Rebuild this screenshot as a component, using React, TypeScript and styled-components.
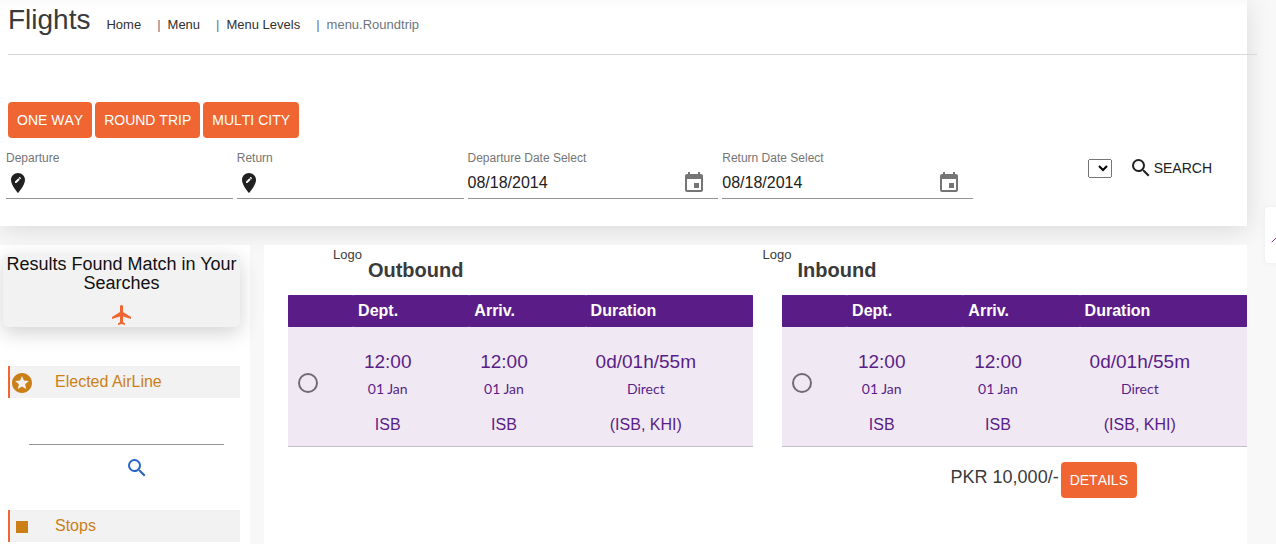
import React from "react";
import styled, { createGlobalStyle } from "styled-components";
import { ChevronUp } from "lucide-react";
import {
  MdEditLocation,
  MdEvent,
  MdFlight,
  MdSearch,
  MdStars,
  MdStop,
} from "react-icons/md";

const orange = "#f06632";
const purple = "#5a1d87";
const amber = "#cb8017";

const GlobalStyle = createGlobalStyle`
  *, *::before, *::after { box-sizing: border-box; }
  html { background: #f8f8f8; }
  body {
    margin: 0;
    font-family: "Liberation Sans", Arial, sans-serif;
    font-size: 13px;
    line-height: 20px;
    color: #3a3a3a;
  }
  h1, h2, h3, p { margin: 0; }
  input, button, select { font-family: inherit; }
`;

const Page = styled.main`
  padding-right: 29px;
`;

const TopCard = styled.section`
  background: #fff;
  box-shadow: 0 4px 24px rgba(0, 0, 0, 0.12);
  padding-bottom: 27px;
  background-image: linear-gradient(#fafafa, #fff 8px);
`;

const Heading = styled.header`
  display: flex;
  align-items: baseline;
  gap: 16px;
  margin: 0 -10px 47px 8px;
  padding: 2px 0 17px;
  border-bottom: 1px solid #d7d7d7;
`;

const Title = styled.h1`
  font-size: 28px;
  font-weight: 400;
  line-height: 35px;
`;

const Crumbs = styled.ol`
  display: flex;
  margin: 0;
  padding: 0;
  list-style: none;
`;

const Crumb = styled.li`
  color: #6c757d;

  & + &::before {
    content: "|";
    margin: 0 7px 0 16px;
  }

  a {
    color: #303030;
    text-decoration: none;
  }
`;

const TripTypes = styled.div`
  display: flex;
  gap: 3px;
  padding-left: 8px;
`;

const OrangeButton = styled.button`
  height: 36px;
  padding: 0 9px;
  border: 0;
  border-radius: 4px;
  background: ${orange};
  color: #fff;
  font-size: 14px;
  font-kerning: none;
  text-transform: uppercase;
`;

const SearchForm = styled.form`
  display: grid;
  grid-template-columns: minmax(0, 967px) auto;
  justify-content: space-between;
  padding: 10px 29px 0 6px;
`;

const Fields = styled.div`
  display: grid;
  grid-template-columns: 227fr 227fr 251fr 251fr;
  gap: 4px;
`;

const Field = styled.div`
  min-width: 0;
`;

const FieldLabel = styled.label`
  display: block;
  font-size: 12px;
  line-height: 20px;
  color: #757575;
`;

const Control = styled.div<{ $padRight?: boolean }>`
  display: flex;
  align-items: center;
  height: 31px;
  padding-right: ${(p) => (p.$padRight ? "12px" : "0")};
  border-bottom: 1px solid #949494;
  color: #212121;
`;

const TextInput = styled.input`
  flex: 1;
  min-width: 0;
  height: 30px;
  padding: 0;
  border: 0;
  outline: 0;
  background: transparent;
  font-size: 16px;
  color: #212121;
`;

const IconButton = styled.button<{ $color: string }>`
  display: flex;
  padding: 0;
  border: 0;
  background: transparent;
  color: ${(p) => p.$color};
`;

const FormActions = styled.div`
  display: flex;
  align-items: center;
  align-self: start;
  gap: 17px;
  padding-top: 8px;
`;

const SmallSelect = styled.select`
  width: 24px;
  height: 19px;
`;

const SearchButton = styled.button`
  display: flex;
  align-items: center;
  gap: 1px;
  height: 24px;
  padding: 0 6px 0 0;
  border: 0;
  background: transparent;
  color: #212121;
  font-size: 14px;
  font-kerning: none;
  text-transform: uppercase;
`;

const Results = styled.div`
  display: grid;
  grid-template-columns: 250px minmax(0, 1fr);
  gap: 14px;
  margin-top: 19px;
`;

const Sidebar = styled.aside`
  padding: 9px 10px 2px 8px;
  background: #fff;
`;

const Summary = styled.section`
  display: flex;
  flex-direction: column;
  align-items: center;
  height: 73px;
  margin: 0 0 39px -5px;
  padding-top: 1px;
  border-radius: 5px;
  background: #f2f2f2;
  box-shadow: 0 6px 20px rgba(0, 0, 0, 0.18);
  text-align: center;

  svg { margin-top: 10px; color: ${orange}; }
`;

const SummaryText = styled.h2`
  font-size: 18px;
  font-weight: 400;
  line-height: 19px;
  color: #111;
`;

const FilterHead = styled.div`
  display: flex;
  align-items: center;
  gap: 21px;
  height: 32px;
  padding-top: 2px;
  border-left: 2px solid ${orange};
  background: #f2f2f2;
  color: ${amber};
`;

const FilterTitle = styled.h3`
  padding-bottom: 2px;
  font-size: 16px;
  font-weight: 400;
`;

const AirlineSearch = styled.div`
  display: flex;
  flex-direction: column;
  align-items: center;
  padding: 16px 16px 30px 21px;
`;

const AirlineInput = styled(TextInput)`
  flex: none;
  width: 100%;
  height: 31px;
  border-bottom: 1px solid #949494;
`;

const AirlineSubmit = styled(IconButton)`
  padding: 11px 0 0 20px;
`;

const Main = styled.section`
  padding-left: 24px;
  background: #fff;
`;

const Directions = styled.div`
  display: grid;
  grid-template-columns: 47fr 53fr;
  height: 50px;
  padding-left: 45px;
`;

const Direction = styled.div`
  display: flex;
  gap: 6px;
`;

const DirectionTitle = styled.h2`
  padding-top: 12px;
  font-size: 20px;
  line-height: 26px;
`;

const Tables = styled.div`
  display: grid;
  grid-template-columns: 1fr 1fr;
  gap: 29px;
`;

const FlightTable = styled.table`
  width: 100%;
  table-layout: fixed;
  border-collapse: separate;
  border-spacing: 0;
  color: ${purple};

  col:nth-child(1) { width: 14%; }
  col:nth-child(2), col:nth-child(3) { width: 25%; }
  thead tr { background: #8e64ad; }
`;

const HeadCell = styled.th`
  height: 32px;
  padding: 0 0 1px 5px;
  border-radius: 1px;
  background: ${purple};
  color: #fff;
  font-size: 16px;
  text-align: left;
`;

const BodyCell = styled.td`
  height: 120px;
  padding: 12px 52px 0 5px;
  border-bottom: 1px solid #c3bfc7;
  background: #f0e9f4;
  text-align: center;
  white-space: nowrap;
`;

const RadioCell = styled(BodyCell)`
  padding: 0 0 8px 10px;
  text-align: left;
`;

const Radio = styled.input`
  appearance: none;
  display: block;
  width: 20px;
  height: 20px;
  margin: 0;
  border: 2px solid #6f6b73;
  border-radius: 50%;

  &:checked { box-shadow: inset 0 0 0 3px #f0e9f4; background: ${purple}; }
`;

const Time = styled.p`
  font-size: 19px;
  line-height: 30px;
`;

const Day = styled.p`
  font-family: Lato, sans-serif;
  font-size: 14px;
  line-height: 24px;
`;

const Place = styled.p`
  padding-top: 11px;
  font-size: 16px;
  line-height: 26px;
`;

const PriceBar = styled.footer`
  display: flex;
  justify-content: flex-end;
  gap: 2px;
  padding: 15px 110px 0 0;
`;

const Price = styled.p`
  font-size: 18px;
  line-height: 30px;
`;

const SettingsTab = styled.button`
  position: fixed;
  top: 207px;
  right: -29px;
  width: 40px;
  height: 56px;
  padding: 8px 0 0 1px;
  border: 0;
  border-radius: 4px;
  background: #fff;
  box-shadow: 0 0 6px rgba(0, 0, 0, 0.05);
  color: #922c88;
  text-align: left;

  svg { display: block; }
`;

const legs = [
  { time: "12:00", day: "01 Jan", place: "ISB" },
  { time: "12:00", day: "01 Jan", place: "ISB" },
  { time: "0d/01h/55m", day: "Direct", place: "(ISB, KHI)" },
];

function PlaceField({ id, label }: { id: string; label: string }) {
  return (
    <Field>
      <FieldLabel htmlFor={id}>{label}</FieldLabel>
      <Control>
        <MdEditLocation size={24} />
        <TextInput id={id} type="text" />
      </Control>
    </Field>
  );
}

function DateField({ id, label }: { id: string; label: string }) {
  return (
    <Field>
      <FieldLabel htmlFor={id}>{label}</FieldLabel>
      <Control $padRight>
        <TextInput id={id} type="text" defaultValue="08/18/2014" />
        <IconButton type="button" $color="#757575" aria-label="Change date">
          <MdEvent size={24} />
        </IconButton>
      </Control>
    </Field>
  );
}

function Flights({ name }: { name: string }) {
  return (
    <FlightTable>
      <colgroup>
        <col />
        <col />
        <col />
        <col />
      </colgroup>
      <thead>
        <tr>
          <HeadCell />
          <HeadCell scope="col">Dept.</HeadCell>
          <HeadCell scope="col">Arriv.</HeadCell>
          <HeadCell scope="col">Duration</HeadCell>
        </tr>
      </thead>
      <tbody>
        <tr>
          <RadioCell>
            <Radio type="radio" name={name} aria-label={`${name} flight`} />
          </RadioCell>
          {legs.map((leg, i) => (
            <BodyCell key={i}>
              <Time>{leg.time}</Time>
              <Day>{leg.day}</Day>
              <Place>{leg.place}</Place>
            </BodyCell>
          ))}
        </tr>
      </tbody>
    </FlightTable>
  );
}

export default function App() {
  return (
    <>
      <GlobalStyle />
      <Page>
        <TopCard>
          <Heading>
            <Title>Flights</Title>
            <nav aria-label="Breadcrumb">
              <Crumbs>
                <Crumb><a href="#home">Home</a></Crumb>
                <Crumb><a href="#menu">Menu</a></Crumb>
                <Crumb><a href="#levels">Menu Levels</a></Crumb>
                <Crumb>menu.Roundtrip</Crumb>
              </Crumbs>
            </nav>
          </Heading>
          <TripTypes>
            <OrangeButton type="button">One way</OrangeButton>
            <OrangeButton type="button">Round trip</OrangeButton>
            <OrangeButton type="button">Multi city</OrangeButton>
          </TripTypes>
          <SearchForm onSubmit={(e) => e.preventDefault()}>
            <Fields>
              <PlaceField id="departure" label="Departure" />
              <PlaceField id="return" label="Return" />
              <DateField id="departure-date" label="Departure Date Select" />
              <DateField id="return-date" label="Return Date Select" />
            </Fields>
            <FormActions>
              <SmallSelect aria-label="Cabin">
                <option></option>
              </SmallSelect>
              <SearchButton type="submit">
                <MdSearch size={24} />
                Search
              </SearchButton>
            </FormActions>
          </SearchForm>
        </TopCard>

        <Results>
          <Sidebar>
            <Summary>
              <SummaryText>Results Found Match in Your Searches</SummaryText>
              <MdFlight size={24} />
            </Summary>
            <FilterHead>
              <MdStars size={24} />
              <FilterTitle>Elected AirLine</FilterTitle>
            </FilterHead>
            <AirlineSearch>
              <AirlineInput type="text" aria-label="Airline" />
              <AirlineSubmit type="button" $color="#2864c8" aria-label="Search airline">
                <MdSearch size={24} />
              </AirlineSubmit>
            </AirlineSearch>
            <FilterHead>
              <MdStop size={24} />
              <FilterTitle>Stops</FilterTitle>
            </FilterHead>
          </Sidebar>

          <Main>
            <Directions>
              <Direction>
                <span>Logo</span>
                <DirectionTitle>Outbound</DirectionTitle>
              </Direction>
              <Direction>
                <span>Logo</span>
                <DirectionTitle>Inbound</DirectionTitle>
              </Direction>
            </Directions>
            <Tables>
              <Flights name="outbound" />
              <Flights name="inbound" />
            </Tables>
            <PriceBar>
              <Price>PKR 10,000/-</Price>
              <OrangeButton type="button">Details</OrangeButton>
            </PriceBar>
          </Main>
        </Results>
      </Page>
      <SettingsTab type="button" aria-label="Open settings">
        <ChevronUp size={24} strokeWidth={1} />
      </SettingsTab>
    </>
  );
}
